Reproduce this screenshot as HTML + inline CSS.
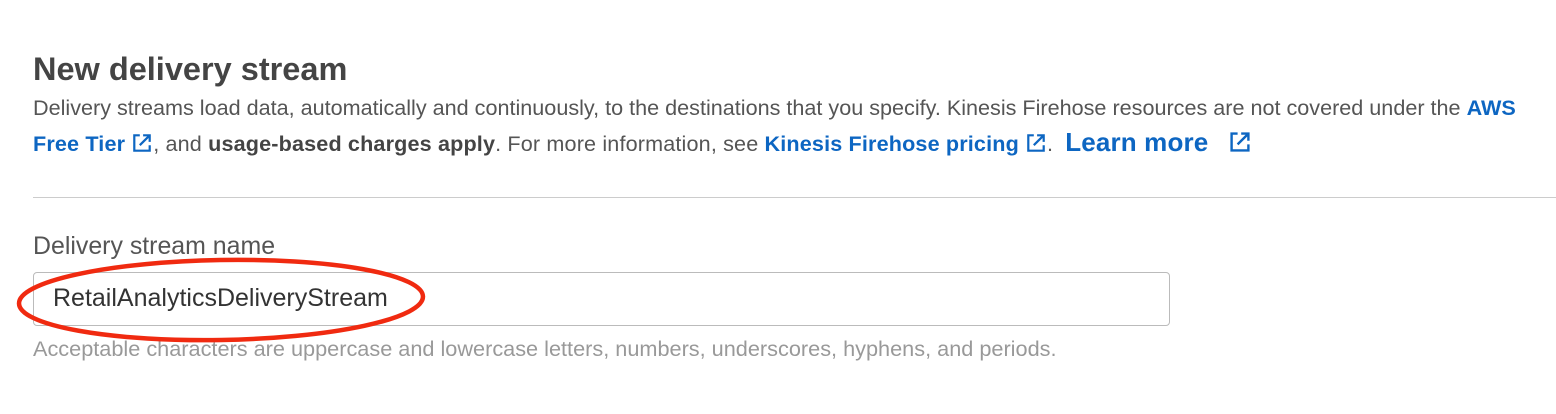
<!DOCTYPE html>
<html><head><style>
body{margin:0;width:1556px;height:414px;background:#fff;font-family:"Liberation Sans",Arial,sans-serif;position:relative;overflow:hidden}
.a{position:absolute;white-space:nowrap}
h1{position:absolute;left:33px;top:51px;margin:0;font-size:32.5px;font-weight:bold;color:#444}
.p{left:33px;font-size:21.6px;color:#555}
.b{color:#0d66c2;font-weight:bold}
.k{color:#444;font-weight:bold}
svg.i{vertical-align:-3px;margin-left:6px}
</style></head><body>
<h1>New delivery stream</h1>
<div class="a p" style="top:95px">Delivery streams load data, automatically and continuously, to the destinations that you specify. Kinesis Firehose resources are not covered under the <span class="b">AWS</span></div>
<div class="a p" style="top:127px;letter-spacing:0.15px"><span class="b">Free Tier</span><svg class="i" width="22" height="22" viewBox="0 0 20 20" fill="none" stroke="#0d66c2" stroke-width="2"><path d="M8 3H3v14h14v-5"/><path d="M8 12L17 3M11 3h6v6"/></svg>, and <span class="k">usage-based charges apply</span>. For more information, see <span class="b">Kinesis Firehose pricing</span><svg class="i" width="22" height="22" viewBox="0 0 20 20" fill="none" stroke="#0d66c2" stroke-width="2"><path d="M8 3H3v14h14v-5"/><path d="M8 12L17 3M11 3h6v6"/></svg>. <span class="b" style="font-size:26px;margin-left:6px">Learn more</span><svg class="i" style="margin-left:20px" width="24" height="24" viewBox="0 0 20 20" fill="none" stroke="#0d66c2" stroke-width="2"><path d="M8 3H3v14h14v-5"/><path d="M8 12L17 3M11 3h6v6"/></svg></div>
<div class="a" style="left:33px;right:0;top:197px;height:1px;background:#ccc"></div>
<div class="a p" style="top:232px;font-size:24.9px">Delivery stream name</div>
<div class="a" style="left:33px;top:272px;width:1135px;height:52px;border:1px solid #bbb;border-radius:4px"></div>
<div class="a" style="left:53px;top:284px;font-size:25px;color:#333">RetailAnalyticsDeliveryStream</div>
<div class="a p" style="top:336px;color:#999;font-size:21.7px">Acceptable characters are uppercase and lowercase letters, numbers, underscores, hyphens, and periods.</div>
<svg class="a" style="left:0;top:0" width="1556" height="414"><ellipse cx="221" cy="300" rx="202" ry="40" fill="none" stroke="#f02a10" stroke-width="4.5" transform="rotate(-1 221 300)"/></svg>
</body></html>
